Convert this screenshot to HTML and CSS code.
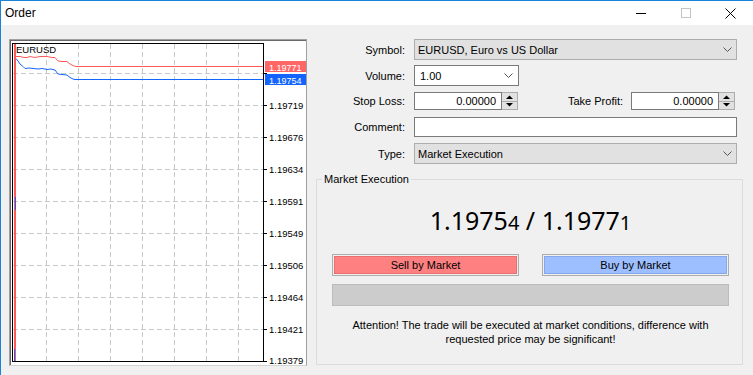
FILE: index.html
```html
<!DOCTYPE html>
<html>
<head>
<meta charset="utf-8">
<link rel="stylesheet" href="styles.css">
</head>
<body>
<div class="window">
  <div class="titlebar">
    <span class="title">Order</span>
    <div class="ctl"><svg width="10" height="10"><path d="M0 5.5H10" stroke="#000"/></svg></div>
    <div class="ctl"><svg width="10" height="10"><rect x="0.5" y="0.5" width="9" height="9" fill="none" stroke="#c4c4c4"/></svg></div>
    <div class="ctl"><svg width="11" height="11"><path d="M0.5 0.5L10.5 10.5M10.5 0.5L0.5 10.5" stroke="#000"/></svg></div>
  </div>
  <div class="body">
    <div class="chart">
      <svg width="296" height="325" viewBox="10 40 296 325">
        <g class="grid" stroke="#c8c8c8" stroke-dasharray="5 3">
          <path d="M46.5 44V361M78.5 44V361M110.5 44V361M142.5 44V361M174.5 44V361M206.5 44V361M238.5 44V361"/>
          <path d="M13 73.5H263M13 105.5H263M13 137.5H263M13 169.5H263M13 201.5H263M13 233.5H263M13 265.5H263M13 297.5H263M13 329.5H263"/>
        </g>
        <rect x="12.5" y="43.5" width="251" height="318" fill="none" stroke="#000"/>
        <path d="M264 73.5H267M264 105.5H267M264 137.5H267M264 169.5H267M264 201.5H267M264 233.5H267M264 265.5H267M264 297.5H267M264 329.5H267M264 361.5H267" stroke="#000"/>
        <g class="axis">
          <text x="269" y="109">1.19719</text>
          <text x="269" y="141">1.19676</text>
          <text x="269" y="173">1.19634</text>
          <text x="269" y="205">1.19591</text>
          <text x="269" y="237">1.19549</text>
          <text x="269" y="269">1.19506</text>
          <text x="269" y="301">1.19464</text>
          <text x="269" y="333">1.19421</text>
          <text x="269" y="364">1.19379</text>
        </g>
        <rect x="14" y="44" width="2" height="317" fill="#ff5a5a"/>
        <rect x="15" y="197" width="1" height="13" fill="#1464ff"/>
        <rect x="14" y="349" width="1" height="12" fill="#1464ff"/>
        <polyline fill="none" stroke="#ff5a5a" points="16,56.5 20,56.5 24,57.5 27,57.5 30,56.5 35,57.5 40,56.5 47,56.5 52,57.5 55,57.5 58,61 62,61.5 67,61.5 70,64 73,65.5 76,66.5 263,66.5"/>
        <polyline fill="none" stroke="#1464ff" points="16,58.5 18,61 20,64 23,66.5 25,68.5 29,68 33,68.5 38,69 42,68.5 47,69.5 51,69 55,70 58,74 62,74.5 67,75 70,77.5 73,79 75,79.5 263,79.5"/>
        <text class="sym" x="16" y="52.5">EURUSD</text>
        <rect x="265" y="61" width="41" height="11" fill="#ff6666"/>
        <text class="tag" x="269" y="70.5">1.19771</text>
        <rect x="265" y="74" width="41" height="11" fill="#1464ff"/>
        <text class="tag" x="269" y="83.5">1.19754</text>
      </svg>
    </div>
    <div class="panel">
      <div class="row r1">
        <span class="lbl">Symbol:</span>
        <div class="combo w-full"><span>EURUSD, Euro vs US Dollar</span><svg width="9" height="5"><polyline points="0.5,0.5 4.5,4.5 8.5,0.5" fill="none" stroke="#555"/></svg></div>
      </div>
      <div class="row r2">
        <span class="lbl">Volume:</span>
        <div class="combo white w-vol"><span>1.00</span><svg width="9" height="5"><polyline points="0.5,0.5 4.5,4.5 8.5,0.5" fill="none" stroke="#555"/></svg></div>
      </div>
      <div class="row r3">
        <span class="lbl">Stop Loss:</span>
        <div class="spin">
          <div class="spin-input">0.00000</div>
          <div class="spin-btns">
            <div class="sb"><svg width="7" height="4"><path d="M0 4H7L3.5 0.5Z" fill="#000"/></svg></div>
            <div class="sb down"><svg width="7" height="4"><path d="M0 0H7L3.5 3.5Z" fill="#000"/></svg></div>
          </div>
        </div>
        <span class="lbl2">Take Profit:</span>
        <div class="spin">
          <div class="spin-input">0.00000</div>
          <div class="spin-btns">
            <div class="sb"><svg width="7" height="4"><path d="M0 4H7L3.5 0.5Z" fill="#000"/></svg></div>
            <div class="sb down"><svg width="7" height="4"><path d="M0 0H7L3.5 3.5Z" fill="#000"/></svg></div>
          </div>
        </div>
      </div>
      <div class="row r4">
        <span class="lbl">Comment:</span>
        <div class="field w-full"></div>
      </div>
      <div class="row r5">
        <span class="lbl">Type:</span>
        <div class="combo w-full"><span>Market Execution</span><svg width="9" height="5"><polyline points="0.5,0.5 4.5,4.5 8.5,0.5" fill="none" stroke="#555"/></svg></div>
      </div>
      <fieldset class="group">
        <legend>Market Execution</legend>
        <div class="price">1.1975<span class="sm">4</span> / 1.1977<span class="sm">1</span></div>
        <div class="btns">
          <div class="btn sell">Sell by Market</div>
          <div class="btn buy">Buy by Market</div>
        </div>
        <div class="bar"></div>
        <div class="note">Attention! The trade will be executed at market conditions, difference with<br>requested price may be significant!</div>
      </fieldset>
    </div>
  </div>
</div>
</body>
</html>
```
FILE: styles.css
```css
* { box-sizing: border-box; }
body {
  margin: 0;
  font-family: "Liberation Sans", Arial, sans-serif;
  font-size: 11px;
  color: #000;
}
.window {
  width: 753px;
  height: 375px;
  border-top: 1px solid #1883d7;
  border-left: 1px solid #1883d7;
  background: #f0f0f0;
  overflow: hidden;
}
.titlebar {
  height: 24px;
  background: #fff;
  display: flex;
  align-items: center;
}
.title {
  flex: 1;
  font-size: 12px;
  padding-left: 4px;
}
.ctl {
  width: 45px;
  height: 24px;
  display: flex;
  align-items: center;
  justify-content: center;
}
.ctl svg { display: block; }
.body {
  display: flex;
  padding: 14px 0 0 8px;
}
.chart {
  width: 298px;
  height: 327px;
  flex: none;
  background: #fff;
  border: 1px solid #a0a0a0;
  border-bottom-color: #d4d4d4;
  box-shadow: inset 1px 1px 0 #696969;
}
.chart svg { display: block; }
.axis text, .sym, .tag {
  font-family: "Liberation Sans", Arial, sans-serif;
  font-size: 9.5px;
}
.axis text, .sym { fill: #000; }
.tag { fill: #fff; font-size: 9px; }
.panel {
  width: 427px;
  margin-left: 9px;
  flex: none;
}
.row {
  display: flex;
  align-items: center;
}
.lbl {
  width: 89px;
  margin-right: 9px;
  text-align: right;
  flex: none;
}
.lbl2 {
  width: 105px;
  margin-right: 8px;
  text-align: right;
  flex: none;
}
.r1 { height: 21px; }
.r2 { height: 21px; margin-top: 5px; }
.r3 { height: 18px; margin-top: 6px; }
.r4 { height: 20px; margin-top: 7px; }
.r5 { height: 21px; margin-top: 6px; }
.combo {
  height: 21px;
  border: 1px solid #adadad;
  background: #e1e1e1;
  display: flex;
  align-items: center;
  justify-content: space-between;
  padding: 0 4px 0 3px;
}
.combo svg { display: block; }
.combo.white {
  background: #fff;
  border-color: #7a7a7a;
  padding: 0 5px 0 5px;
}
.w-full { width: 323px; }
.w-vol { width: 105px; }
.field {
  height: 20px;
  border: 1px solid #7a7a7a;
  background: #fff;
}
.spin {
  display: flex;
  width: 104px;
  height: 18px;
  flex: none;
}
.spin-input {
  width: 88px;
  border: 1px solid #7a7a7a;
  background: #fff;
  text-align: right;
  padding-right: 5px;
  line-height: 16px;
}
.spin-btns {
  width: 16px;
  border: 1px solid #adadad;
  border-left: none;
  background: #e1e1e1;
  display: flex;
  flex-direction: column;
}
.sb {
  flex: 1;
  display: flex;
  align-items: center;
  justify-content: center;
}
.sb svg { display: block; }
.sb.down { border-top: 1px solid #adadad; }
.group {
  margin: 8px 0 0 0;
  padding: 0 13px 18px 15px;
  border: 1px solid #dcdcdc;
  min-width: 0;
}
.group legend {
  padding: 0 2px;
  margin-left: -10px;
  line-height: 14px;
}
.price {
  margin-top: 19px;
  text-align: center;
  font-family: "Noto Sans", sans-serif;
  font-size: 25px;
  line-height: 30px;
}
.price .sm {
  font-size: 20px;
  line-height: 1;
}
.btns {
  display: flex;
  gap: 23px;
  margin-top: 19px;
}
.btn {
  flex: 1;
  height: 22px;
  border: 1px solid #adadad;
  display: flex;
  align-items: center;
  justify-content: center;
}
.sell {
  background: #ff8080;
  box-shadow: inset 0 0 0 1px #f0f0f0, inset 0 0 0 2px #e86f6f;
}
.buy {
  background: #9ebfff;
  box-shadow: inset 0 0 0 1px #f0f0f0, inset 0 0 0 2px #84a8ee;
}
.bar {
  height: 22px;
  margin-top: 8px;
  background: #cccccc;
  border: 1px solid #bcbcbc;
}
.note {
  margin-top: 12px;
  text-align: center;
  line-height: 14px;
}
```
